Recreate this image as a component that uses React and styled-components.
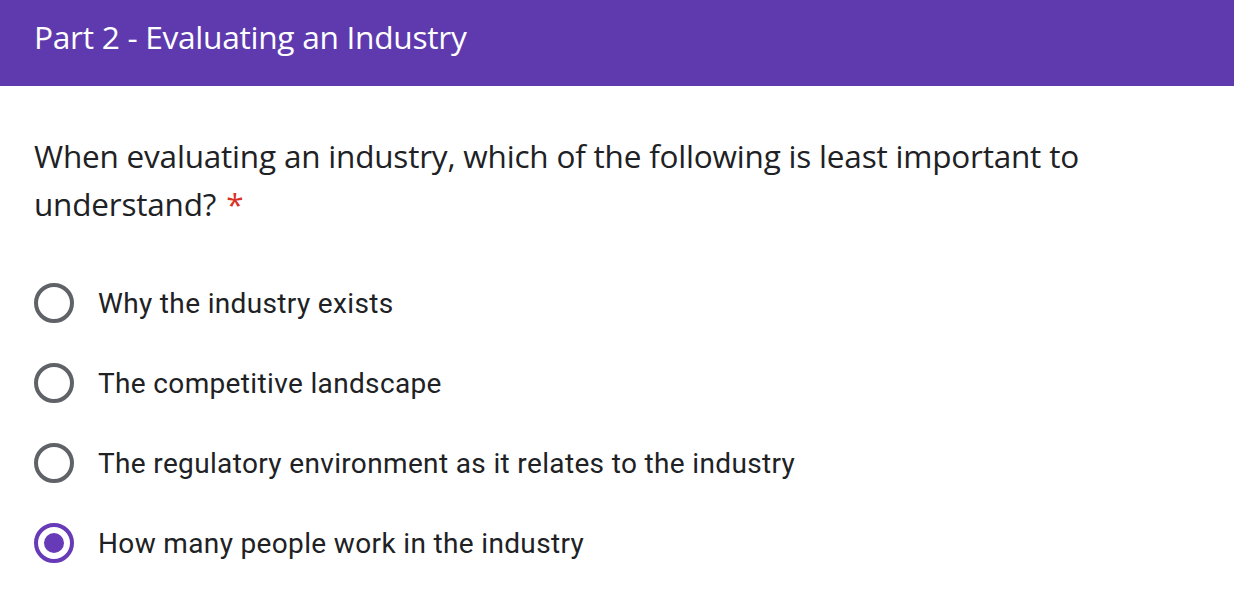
import React, { useState } from 'react';
import styled, { createGlobalStyle } from 'styled-components';

const GlobalStyle = createGlobalStyle`
    body {
        margin: 0;
        background: #ffffff;
    }
`;

const options = [
    "Why the industry exists",
    "The competitive landscape",
    "The regulatory environment as it relates to the industry",
    "How many people work in the industry",
];

const App = () => {
    const [selected, setSelected] = useState(3);

    return (
        <Page>
            <GlobalStyle />
            <Header>
                <Title>Part 2 - Evaluating an Industry</Title>
            </Header>
            <Body>
                <Question>
                    When evaluating an industry, which of the following is least important to understand?
                    <Required>*</Required>
                </Question>
                <OptionList>
                    {options.map((label, i) => (
                        <Option key={label} onClick={() => setSelected(i)}>
                            <Radio checked={selected === i} />
                            <OptionLabel>{label}</OptionLabel>
                        </Option>
                    ))}
                </OptionList>
            </Body>
        </Page>
    );
};

const Page = styled.div`
    width: 1234px;
    height: 616px;
    overflow: hidden;
    background: #ffffff;
`;

const Header = styled.div`
    height: 86px;
    background-color: #5e3aae;
    display: flex;
    align-items: center;
    padding: 0 34px;
    box-sizing: border-box;
`;

const Title = styled.h1`
    margin: 0 0 13px 0;
    color: #ffffff;
    font-family: "Open Sans", sans-serif;
    font-weight: 400;
    font-size: 31.7px;
    letter-spacing: -0.3px;
`;

const Body = styled.div`
    padding: 46px 34px 0 34px;
`;

const Question = styled.div`
    max-width: 1080px;
    color: #202124;
    font-family: "Open Sans", sans-serif;
    font-size: 31.5px;
    line-height: 48px;
    letter-spacing: -0.2px;
`;

const Required = styled.span`
    color: #d93025;
    margin-left: 10px;
`;

const OptionList = styled.div`
    margin-top: 55px;
    display: flex;
    flex-direction: column;
    gap: 40px;
`;

const Option = styled.div`
    display: flex;
    align-items: center;
    height: 40px;
    gap: 24px;
    cursor: pointer;
`;

const Radio = styled.div`
    width: 40px;
    height: 40px;
    box-sizing: border-box;
    border-radius: 50%;
    border: 4px solid ${p => (p.checked ? '#673ab7' : '#5f6368')};
    display: flex;
    align-items: center;
    justify-content: center;
    flex-shrink: 0;

    &::after {
        content: "";
        width: 20px;
        height: 20px;
        border-radius: 50%;
        background: #673ab7;
        display: ${p => (p.checked ? 'block' : 'none')};
    }
`;

const OptionLabel = styled.span`
    color: #202124;
    font-family: Roboto, sans-serif;
    font-size: 28px;
    letter-spacing: 0.35px;
`;

export default App;
